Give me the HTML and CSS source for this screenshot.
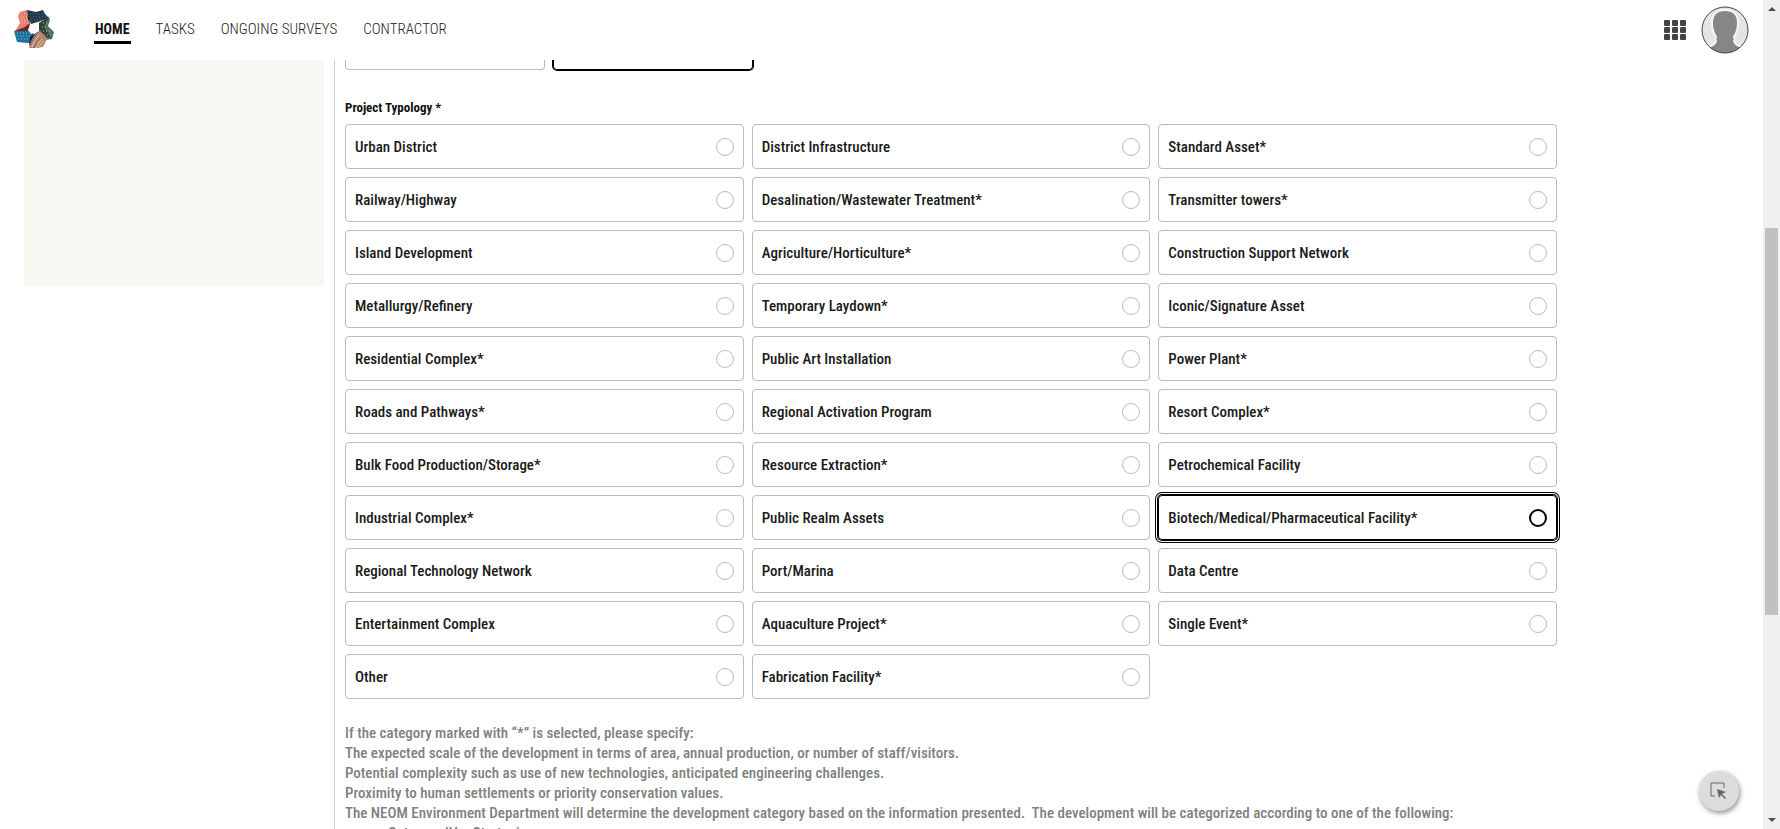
FILE: index.html
```html
<!DOCTYPE html>
<html lang="en">
<head>
<meta charset="utf-8">
<title>Project Typology</title>
<link rel="stylesheet" href="styles.css">
</head>
<body>
<div class="page">
  <header class="topbar">
    <a class="logo" href="#" aria-label="Home page">
      <svg width="42" height="40" viewBox="0 0 42 40">
        <path d="M7 2l7-2 4 4-1 7-1 9-14 1 5-8-2-7z" fill="#e5806c"/>
        <path d="M2 21l10-4 5-4-1 7-3 2z" fill="#5e2a28"/>
        <path d="M14 0l9 2 7-2 2 4 4 4-8 3-10 3-2-5z" fill="#22384c"/>
        <path d="M14 0l3 13-2-4z" fill="#0d151d"/>
        <path d="M36 7l1 3-2 6 6 6-2 7-7 1-6-8 0-9z" fill="#53715a"/>
        <path d="M36 7l-10 6 0 6 8 9 5 1-8-12z" fill="#2e4436"/>
        <path d="M1 21l16 0 5 4-3 7-4 1-11-1z" fill="#1c6f9d"/>
        <path d="M16 36l1-9 9-6-5 8z" fill="#10212e"/>
        <path d="M22 24l5-3 7 8-4 8-6 1-8 0 2-7z" fill="#b9866f"/>
        <path d="M19 37q3-7 7-12m-3 13q3-7 6-9m-3 8q2-4 5-6" stroke="#e3c5a2" fill="none"/>
        <path d="M17 35q3-6 7-11m-3 14q2-7 6-10" stroke="#72667c" fill="none"/>
        <g fill="none" stroke-width="1" stroke-dasharray="1 2">
          <path d="M8 4h7M7 7h8M8 10h8M8 13h7" stroke="#ffc0ad"/>
          <path d="M17 4h15M17 7h17M18 10h11" stroke="#54748b"/>
          <path d="M30 13h5M29 17h6M30 21h9M31 25h8M33 28h5" stroke="#a4bd9f"/>
          <path d="M4 23h12M4 26h13M5 29h12" stroke="#7fc4e6"/>
        </g>
        <path d="M17 15l9-2v7l-4 2-4 2-3-4z" fill="#fff"/>
      </svg>
    </a>
    <nav class="nav">
      <a class="nav-link is-active" href="#">HOME</a>
      <a class="nav-link" href="#">TASKS</a>
      <a class="nav-link" href="#">ONGOING SURVEYS</a>
      <a class="nav-link" href="#">CONTRACTOR</a>
    </nav>
    <div class="tools">
      <button class="icon-button" type="button" aria-label="Apps">
        <svg width="22" height="20" viewBox="0 0 22 20" fill="#444">
          <rect width="6" height="6" rx="1"/><rect x="8" width="6" height="6" rx="1"/><rect x="16" width="6" height="6" rx="1"/>
          <rect y="7" width="6" height="6" rx="1"/><rect x="8" y="7" width="6" height="6" rx="1"/><rect x="16" y="7" width="6" height="6" rx="1"/>
          <rect y="14" width="6" height="6" rx="1"/><rect x="8" y="14" width="6" height="6" rx="1"/><rect x="16" y="14" width="6" height="6" rx="1"/>
        </svg>
      </button>
      <button class="icon-button" type="button" aria-label="Profile">
        <svg width="48" height="48" viewBox="0 0 48 48">
          <defs><clipPath id="disc"><circle cx="24" cy="24" r="23"/></clipPath></defs>
          <circle cx="24" cy="24" r="23" fill="#e4e4e4"/>
          <g clip-path="url(#disc)">
            <path d="M24 4c9 0 13 5 13 13 0 8-2 11-4 14-1 4 0 6 3 8 4 2 7 3 8 9H4c1-6 4-7 8-9 3-2 4-4 3-8-2-3-4-6-4-14C11 9 15 4 24 4z" fill="#868686" stroke="#f6f6f6" stroke-width="2"/>
            <path d="M8 42c8-2 9-6 7-10h18c-2 4-1 8 7 10v6H8z" fill="#868686"/>
          </g>
          <circle cx="24" cy="24" r="23" fill="none" stroke="#444"/>
        </svg>
      </button>
    </div>
  </header>
  <div class="body">
    <aside class="panel"></aside>
    <main class="content">
      <div class="pair"><div class="pair-card"></div><div class="pair-card is-selected"></div></div>
      <fieldset class="typology">
        <legend class="legend">Project Typology *</legend>
        <div class="grid">
          <label class="option"><span>Urban District</span><input type="radio" name="t"></label>
          <label class="option"><span>District Infrastructure</span><input type="radio" name="t"></label>
          <label class="option"><span>Standard Asset*</span><input type="radio" name="t"></label>
          <label class="option"><span>Railway/Highway</span><input type="radio" name="t"></label>
          <label class="option"><span>Desalination/Wastewater Treatment*</span><input type="radio" name="t"></label>
          <label class="option"><span>Transmitter towers*</span><input type="radio" name="t"></label>
          <label class="option"><span>Island Development</span><input type="radio" name="t"></label>
          <label class="option"><span>Agriculture/Horticulture*</span><input type="radio" name="t"></label>
          <label class="option"><span>Construction Support Network</span><input type="radio" name="t"></label>
          <label class="option"><span>Metallurgy/Refinery</span><input type="radio" name="t"></label>
          <label class="option"><span>Temporary Laydown*</span><input type="radio" name="t"></label>
          <label class="option"><span>Iconic/Signature Asset</span><input type="radio" name="t"></label>
          <label class="option"><span>Residential Complex*</span><input type="radio" name="t"></label>
          <label class="option"><span>Public Art Installation</span><input type="radio" name="t"></label>
          <label class="option"><span>Power Plant*</span><input type="radio" name="t"></label>
          <label class="option"><span>Roads and Pathways*</span><input type="radio" name="t"></label>
          <label class="option"><span>Regional Activation Program</span><input type="radio" name="t"></label>
          <label class="option"><span>Resort Complex*</span><input type="radio" name="t"></label>
          <label class="option"><span>Bulk Food Production/Storage*</span><input type="radio" name="t"></label>
          <label class="option"><span>Resource Extraction*</span><input type="radio" name="t"></label>
          <label class="option"><span>Petrochemical Facility</span><input type="radio" name="t"></label>
          <label class="option"><span>Industrial Complex*</span><input type="radio" name="t"></label>
          <label class="option"><span>Public Realm Assets</span><input type="radio" name="t"></label>
          <label class="option is-focused"><span>Biotech/Medical/Pharmaceutical Facility*</span><input type="radio" name="t"></label>
          <label class="option"><span>Regional Technology Network</span><input type="radio" name="t"></label>
          <label class="option"><span>Port/Marina</span><input type="radio" name="t"></label>
          <label class="option"><span>Data Centre</span><input type="radio" name="t"></label>
          <label class="option"><span>Entertainment Complex</span><input type="radio" name="t"></label>
          <label class="option"><span>Aquaculture Project*</span><input type="radio" name="t"></label>
          <label class="option"><span>Single Event*</span><input type="radio" name="t"></label>
          <label class="option"><span>Other</span><input type="radio" name="t"></label>
          <label class="option"><span>Fabrication Facility*</span><input type="radio" name="t"></label>
        </div>
      </fieldset>
      <div class="notes">
        <p>If the category marked with “*” is selected, please specify:</p>
        <p>The expected scale of the development in terms of area, annual production, or number of staff/visitors.</p>
        <p>Potential complexity such as use of new technologies, anticipated engineering challenges.</p>
        <p>Proximity to human settlements or priority conservation values.</p>
        <p>The NEOM Environment Department will determine the development category based on the information presented.&nbsp; The development will be categorized according to one of the following:</p>
        <ul><li>Category IV – Strategic</li></ul>
      </div>
    </main>
  </div>
</div>
<div class="scrollbar" aria-hidden="true">
  <svg width="17" height="17" viewBox="0 0 17 17"><path d="M5 11l4-4 4 4z" fill="#505050"/></svg>
  <div class="track"><div class="thumb"></div></div>
  <svg width="17" height="17" viewBox="0 0 17 17"><path d="M5 6l4 4 4-4z" fill="#505050"/></svg>
</div>
<button class="fab" type="button" aria-label="Select element">
  <svg width="18" height="18" viewBox="0 0 18 18"><path d="M5 14H1V1h13v5" fill="none" stroke="#666" stroke-width="1"/><path d="M7 7l9 3-4 2 4 4-1 1-4-4-2 3z" fill="#666"/></svg>
</button>
</body>
</html>
```

FILE: styles.css
```css
* {
  box-sizing: border-box;
}

body {
  display: flex;
  height: 100vh;
  margin: 0;
  overflow: hidden;
  background: #fff;
  color: #1a1a1a;
  font-family: "Roboto Condensed", Roboto, "Liberation Sans Narrow", sans-serif;
  font-size: 15px;
  font-weight: 500;
}

.page {
  display: flex;
  flex: 1;
  flex-direction: column;
  min-width: 0;
}

.topbar {
  display: flex;
  flex: none;
  align-items: center;
  height: 60px;
  padding: 0 14px 0 13px;
}

.logo {
  display: flex;
}

.nav {
  display: flex;
  gap: 24px;
  margin-left: 39px;
  line-height: 20px;
  font-weight: 300;
}

.nav-link {
  padding: 3px 1px 2px;
  border-bottom: 3px solid transparent;
  color: #222;
  text-decoration: none;
}

.nav-link.is-active {
  border-color: #000;
  color: #111;
  font-size: 14px;
  font-weight: 700;
}

.tools {
  display: flex;
  gap: 15px;
  align-items: center;
  margin-left: auto;
}

.icon-button {
  display: flex;
  padding: 0;
  border: 0;
  background: none;
}

.body {
  display: flex;
  flex: 1;
  gap: 10px;
  min-height: 0;
  padding-left: 24px;
  overflow: hidden;
}

.panel {
  width: 300px;
  height: 226px;
  background: #f8f7f2;
}

.content {
  flex: 1;
  min-width: 0;
  padding: 0 206px 0 10px;
  border-left: 1px solid #ccc;
}

.pair {
  display: flex;
  gap: 8px;
}

.pair-card {
  width: 200px;
  height: 10px;
  border: 1px solid #bbb;
  border-top: 0;
  border-radius: 0 0 4px 4px;
}

.pair-card.is-selected {
  border-color: #000;
  box-shadow: 0 0 0 1px #000;
  clip-path: inset(0 -2px -2px -2px);
}

.typology {
  margin: 0;
  padding: 28px 0 0;
  border: 0;
}

.legend {
  float: left;
  padding: 0;
  color: #111;
  font-size: 13px;
  font-weight: 700;
  line-height: 20px;
}

.grid {
  display: grid;
  grid-template-columns: repeat(3, 1fr);
  gap: 8px;
  clear: both;
  padding-top: 6px;
}

.option {
  display: flex;
  align-items: center;
  justify-content: space-between;
  min-height: 45px;
  padding: 0 9px;
  border: 1px solid #bbb;
  border-radius: 4px;
}

.option input {
  width: 18px;
  height: 18px;
  margin: 0;
  border: 1px solid #bbb;
  border-radius: 50%;
  appearance: none;
}

.option.is-focused {
  border-color: #000;
  box-shadow: 0 0 0 1px #000, 0 0 0 2px #fff, 0 0 0 3px #000;
}

.is-focused input {
  border: 2px solid #000;
}

.notes {
  padding-top: 24px;
  color: #808080;
  line-height: 20px;
}

.notes p,
.notes ul {
  margin: 0;
}

.notes ul {
  padding-left: 43px;
}

.scrollbar {
  display: flex;
  flex: none;
  flex-direction: column;
  width: 17px;
  background: #f0f0f0;
}

.track {
  flex: 1;
  padding: 0 2px;
}

.thumb {
  height: 387px;
  margin-top: 211px;
  background: #c1c1c1;
}

.fab {
  position: fixed;
  right: 41px;
  bottom: 18px;
  display: flex;
  align-items: center;
  justify-content: center;
  width: 40px;
  height: 40px;
  padding: 0;
  border: 0;
  border-radius: 50%;
  background: #dcdcdc;
  box-shadow: 1px 2px 5px rgb(0 0 0 / 45%);
}
```
